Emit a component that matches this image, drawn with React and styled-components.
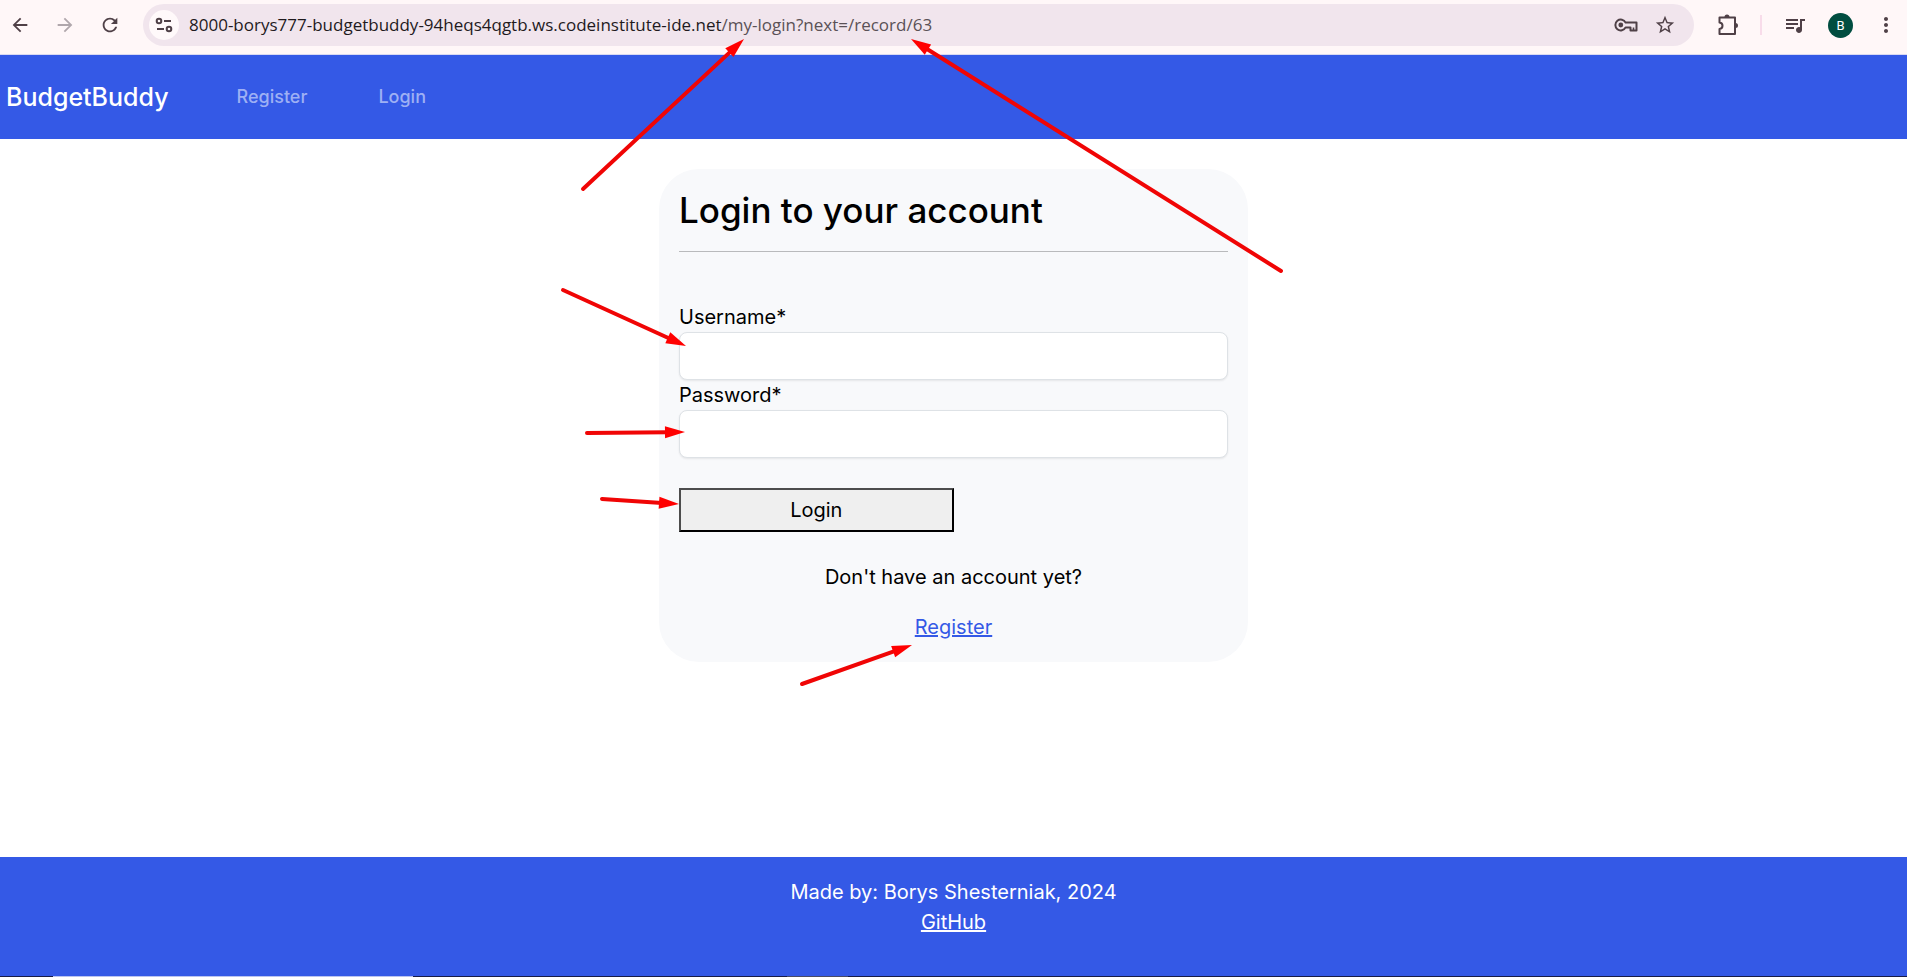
import React from "react";
import styled, { createGlobalStyle } from "styled-components";
import { MdArrowBack, MdArrowForward, MdRefresh, MdStarBorder, MdQueueMusic, MdMoreVert } from "react-icons/md";

const BLUE = "#3459e6";

const GlobalStyle = createGlobalStyle`
  *, *::before, *::after { box-sizing: border-box; }
  body {
    margin: 0;
    background: #fff;
    color: #000;
    font-family: Inter, "Liberation Sans", sans-serif;
    font-size: 20px;
    line-height: 30px;
  }
`;

const Screen = styled.div`
  position: relative;
  min-height: 100vh;
  display: flex;
  flex-direction: column;
  overflow-x: hidden;
`;

const BrowserBar = styled.div`
  display: flex;
  align-items: center;
  gap: 18px;
  padding: 4px 6px 8px 5px;
  background: #fff7f8;
  border-bottom: 1px solid #d9d9f2;
`;

const HistoryButtons = styled.div`
  display: flex;
  gap: 15px;
`;

const IconButton = styled.button`
  display: flex;
  align-items: center;
  justify-content: center;
  width: 30px;
  height: 30px;
  padding: 0;
  border: 0;
  border-radius: 50%;
  background: ${(p) => (p.$filled ? "#fff9fa" : "transparent")};
  color: ${(p) => (p.$muted ? "#b0a7ac" : "#4f4047")};
`;

const AddressBar = styled.div`
  flex: 1;
  min-width: 0;
  display: flex;
  align-items: center;
  gap: 9px;
  height: 42px;
  padding: 0 14px 0 6px;
  border-radius: 21px;
  background: #f1e5ed;
`;

const Url = styled.div`
  flex: 1;
  min-width: 0;
  padding-left: 1px;
  overflow: hidden;
  white-space: nowrap;
  color: #1f1a1d;
  font-family: "Open Sans", "Noto Sans", sans-serif;
  font-size: 17px;
`;

const UrlPath = styled.span`
  color: #5a5156;
`;

const Divider = styled.span`
  width: 2px;
  height: 20px;
  background: #f8dcea;
`;

const Avatar = styled.button`
  width: 25px;
  height: 25px;
  padding: 0;
  border: 0;
  border-radius: 50%;
  background: #014d40;
  color: #fff;
  font-family: Roboto, sans-serif;
  font-size: 13px;
  line-height: 25px;
`;

const Navbar = styled.nav`
  display: flex;
  align-items: center;
  height: 84px;
  padding: 0 6px;
  background: ${BLUE};
`;

const Brand = styled.a`
  margin-right: 68px;
  color: #fff;
  font-size: 25px;
  font-weight: 500;
  text-decoration: none;
`;

const NavLinks = styled.div`
  display: flex;
  gap: 71px;
`;

const NavLink = styled.a`
  color: #9eb0f4;
  font-size: 18px;
  font-weight: 500;
  text-decoration: none;
`;

const Main = styled.main`
  flex: 1;
  padding: 30px 20px;
`;

const Card = styled.section`
  width: 100%;
  max-width: 589px;
  margin: 0 auto;
  padding: 20px;
  border-radius: 40px;
  background: #f8f9fb;
`;

const Title = styled.h1`
  margin: 0;
  padding-bottom: 20px;
  border-bottom: 1px solid #b9babc;
  font-size: 35px;
  font-weight: 500;
  line-height: 42px;
`;

const LoginForm = styled.form`
  display: flex;
  flex-direction: column;
  padding-top: 50px;
`;

const TextField = styled.input`
  width: 100%;
  height: 48px;
  padding: 8px 15px;
  border: 1px solid #dee2e6;
  border-radius: 8px;
  background: #fff;
  box-shadow: 0 1px 2px rgba(0, 0, 0, 0.08);
  font: inherit;
`;

const SubmitButton = styled.button`
  width: 50%;
  height: 44px;
  margin-top: 30px;
  padding: 0;
  border: 2px solid;
  border-color: #4d4d4d #000 #000 #4d4d4d;
  background: #efefef;
  color: #000;
  font: inherit;
`;

const SignUp = styled.div`
  display: flex;
  flex-direction: column;
  align-items: center;
  gap: 20px;
  padding-top: 30px;
`;

const TextLink = styled.a`
  color: ${(p) => p.$color};
`;

const Text = styled.p`
  margin: 0;
`;

const Footer = styled.footer`
  padding: 20px 20px 39px;
  background: ${BLUE};
  color: #fff;
  text-align: center;
`;

const TaskbarEdge = styled.div`
  height: 1px;
  background: linear-gradient(
    to right,
    #171c48 53px, #b9c3f0 53px 413px, #171c48 413px 787px, #484b66 787px 848px, #171c48 848px
  );
`;

const Annotations = styled.svg`
  position: absolute;
  inset: 0;
  width: 100%;
  height: 100%;
  pointer-events: none;
`;

const arrows = [
  { from: [583, 189], to: [744, 39] },
  { from: [1281, 271], to: [911, 39] },
  { from: [563, 290], to: [686, 346] },
  { from: [587, 433], to: [685, 432] },
  { from: [602, 499], to: [679, 504] },
  { from: [802, 684], to: [912, 645] },
];

function Arrow({ from, to }) {
  const dx = to[0] - from[0];
  const dy = to[1] - from[1];
  const length = Math.hypot(dx, dy);
  const angle = (Math.atan2(dy, dx) * 180) / Math.PI;
  return (
    <g transform={`translate(${from[0]} ${from[1]}) rotate(${angle})`}>
      <line x1="0" y1="0" x2={length - 17} y2="0" stroke="#f00505" strokeWidth="4" strokeLinecap="round" />
      <path d={`M${length} 0 l-20 -6 v12 z`} fill="#ff0000" />
    </g>
  );
}

const SiteSettingsIcon = () => (
  <svg width="18" height="16" viewBox="0 0 18 16" fill="none" stroke="currentColor" strokeWidth="2">
    <circle cx="4" cy="4" r="2.3" />
    <path d="M9 4h7M2 12h7" />
    <circle cx="14" cy="12" r="2.3" />
  </svg>
);

const KeyIcon = () => (
  <svg width="24" height="14" viewBox="0 0 24 14" fill="none" stroke="currentColor" strokeWidth="2" strokeLinejoin="round">
    <path d="M11.6 4.6A5.4 5.4 0 1 0 11.6 9.4H16.5V12.4H22.5V4.6Z" />
    <path d="M19.5 12V9.5" strokeWidth="1.6" />
    <circle cx="6.8" cy="7" r="2.4" fill="currentColor" stroke="none" />
  </svg>
);

const ExtensionIcon = () => (
  <svg width="22" height="22" viewBox="-1 1 22 22" fill="none" stroke="currentColor" strokeWidth="2" strokeLinejoin="round">
    <path d="M2.5 4.5H18V21H2.5V16C6.5 15.5 6.5 10 2.5 9.5Z" />
    <path d="M7.5 4a2.5 2.5 0 0 1 5 0zM18.5 10a2.5 2.5 0 0 1 0 5z" fill="currentColor" stroke="none" />
  </svg>
);

export default function App() {
  return (
    <Screen>
      <GlobalStyle />
      <BrowserBar>
        <HistoryButtons>
          <IconButton aria-label="Back"><MdArrowBack size={22} /></IconButton>
          <IconButton aria-label="Forward" $muted><MdArrowForward size={22} /></IconButton>
          <IconButton aria-label="Reload"><MdRefresh size={22} /></IconButton>
        </HistoryButtons>
        <AddressBar>
          <IconButton aria-label="View site information" $filled><SiteSettingsIcon /></IconButton>
          <Url>
            8000-borys777-budgetbuddy-94heqs4qgtb.ws.codeinstitute-ide.net<UrlPath>/my-login?next=/record/63</UrlPath>
          </Url>
          <IconButton aria-label="Manage passwords"><KeyIcon /></IconButton>
          <IconButton aria-label="Bookmark this tab"><MdStarBorder size={22} /></IconButton>
        </AddressBar>
        <IconButton aria-label="Extensions"><ExtensionIcon /></IconButton>
        <Divider />
        <IconButton aria-label="Media controls"><MdQueueMusic size={24} /></IconButton>
        <Avatar>B</Avatar>
        <IconButton aria-label="Browser menu"><MdMoreVert size={24} /></IconButton>
      </BrowserBar>

      <Navbar>
        <Brand href="#home">BudgetBuddy</Brand>
        <NavLinks>
          <NavLink href="#register">Register</NavLink>
          <NavLink href="#login">Login</NavLink>
        </NavLinks>
      </Navbar>

      <Main>
        <Card>
          <Title>Login to your account</Title>
          <LoginForm onSubmit={(e) => e.preventDefault()}>
            <label htmlFor="username">Username*</label>
            <TextField id="username" name="username" type="text" autoComplete="username" />
            <label htmlFor="password">Password*</label>
            <TextField id="password" name="password" type="password" autoComplete="current-password" />
            <SubmitButton type="submit">Login</SubmitButton>
          </LoginForm>
          <SignUp>
            <Text>Don't have an account yet?</Text>
            <TextLink href="#register" $color={BLUE}>Register</TextLink>
          </SignUp>
        </Card>
      </Main>

      <Footer>
        <Text>Made by: Borys Shesterniak, 2024</Text>
        <TextLink href="#github" $color="#fff">GitHub</TextLink>
      </Footer>
      <TaskbarEdge />

      <Annotations aria-hidden="true">
        {arrows.map((arrow) => (
          <Arrow key={arrow.from.join()} {...arrow} />
        ))}
      </Annotations>
    </Screen>
  );
}
